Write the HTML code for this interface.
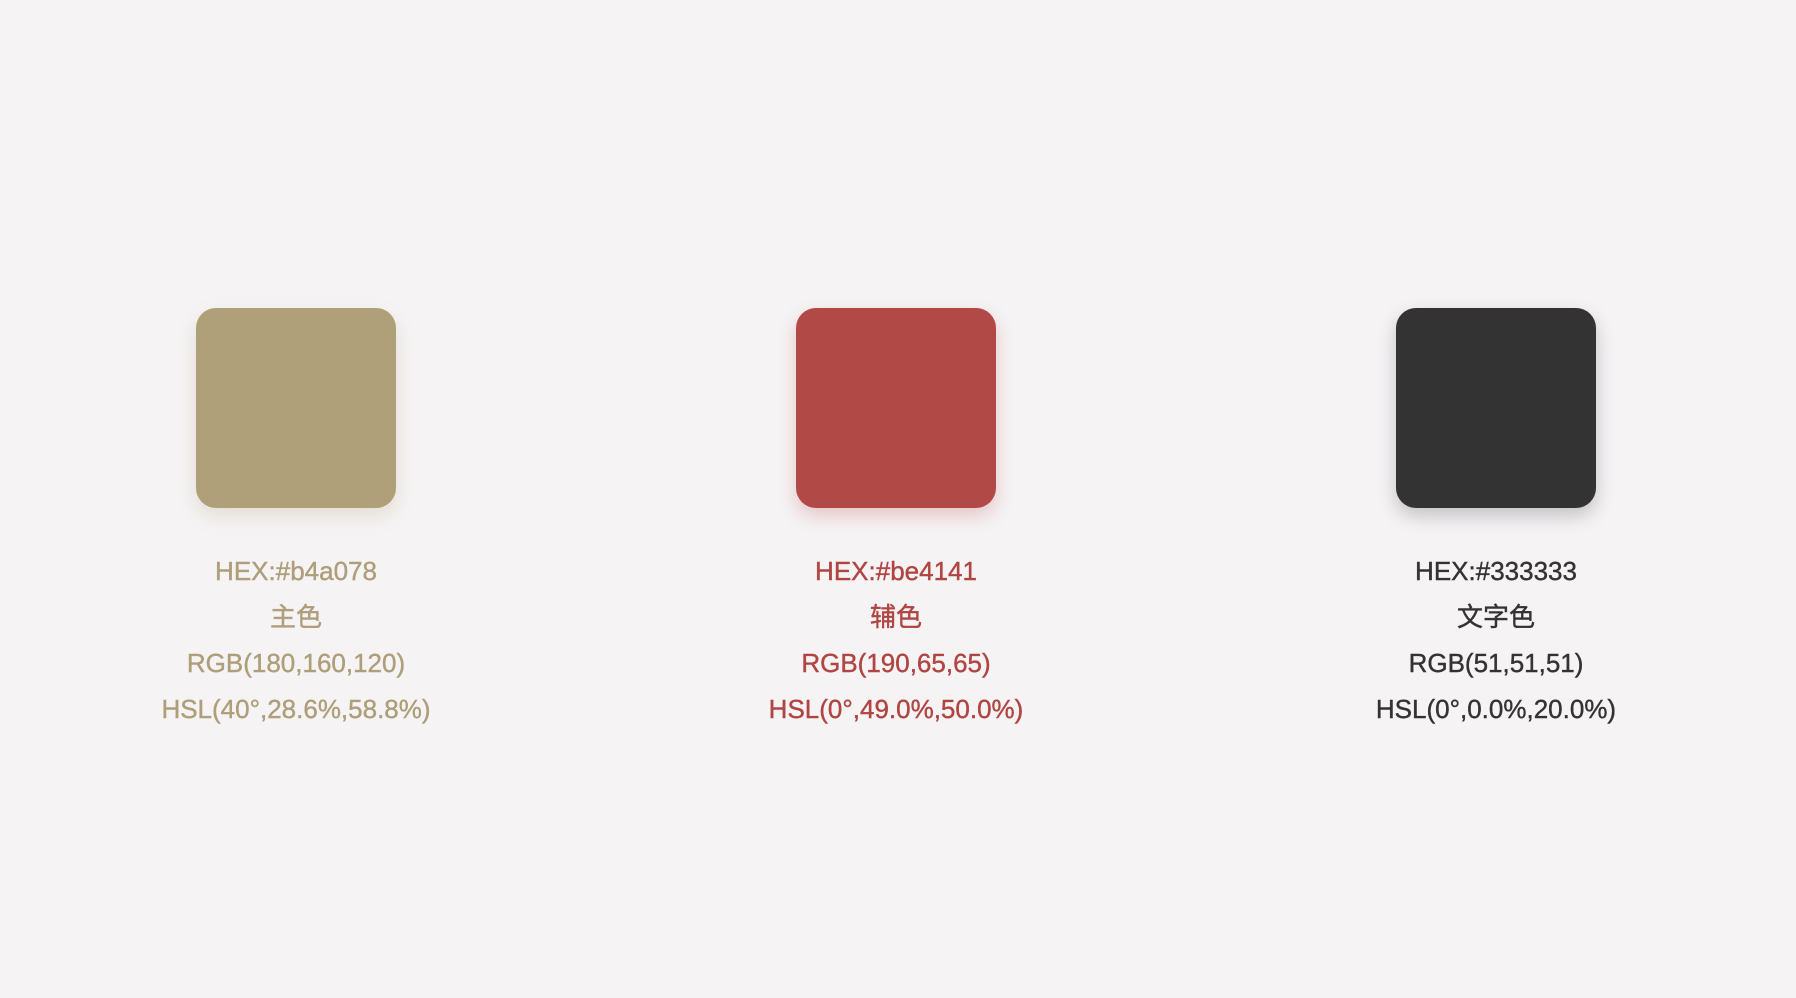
<!DOCTYPE html>
<html><head><meta charset="utf-8"><style>
body{margin:0;width:1796px;height:998px;background:#f5f3f4;font-family:"Liberation Sans","Noto Sans CJK SC",sans-serif;overflow:hidden;position:relative}
.c{position:absolute;top:308px;width:400px;margin-left:-200px;text-align:center}
.s{width:200px;height:200px;border-radius:20px;margin:0 auto}
.t{margin-top:40px;font-size:26px;line-height:46px;-webkit-text-stroke:0.4px currentColor}
</style></head><body>
<div class="c" style="left:296px"><div class="s" style="background:#b0a079;box-shadow:0 8px 18px rgba(176,160,121,.25)"></div><div class="t" style="color:#ae9e7a">HEX:#b4a078<br>主色<br>RGB(180,160,120)<br>HSL(40°,28.6%,58.8%)</div></div>
<div class="c" style="left:896px"><div class="s" style="background:#b14a46;box-shadow:0 8px 18px rgba(190,65,65,.25)"></div><div class="t" style="color:#b04542">HEX:#be4141<br>辅色<br>RGB(190,65,65)<br>HSL(0°,49.0%,50.0%)</div></div>
<div class="c" style="left:1496px"><div class="s" style="background:#333;box-shadow:0 8px 18px rgba(51,51,51,.25)"></div><div class="t" style="color:#333">HEX:#333333<br>文字色<br>RGB(51,51,51)<br>HSL(0°,0.0%,20.0%)</div></div>
</body></html>
